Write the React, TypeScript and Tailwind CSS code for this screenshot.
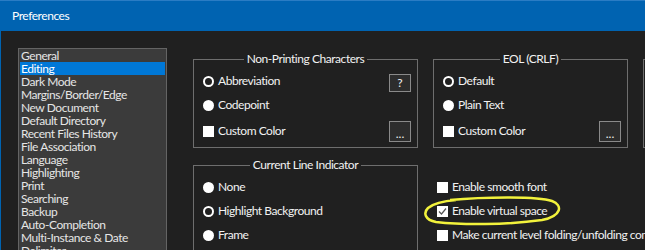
import type { ReactNode } from "react";

const font = { fontFamily: 'Lato, "Noto Sans", Arial, sans-serif' };

const pages = [
  "General",
  "Editing",
  "Dark Mode",
  "Margins/Border/Edge",
  "New Document",
  "Default Directory",
  "Recent Files History",
  "File Association",
  "Language",
  "Highlighting",
  "Print",
  "Searching",
  "Backup",
  "Auto-Completion",
  "Multi-Instance & Date",
  "Delimiter",
];

function Radio({ checked, label }: { checked?: boolean; label: string }) {
  return (
    <div className="flex items-center gap-[4px]">
      {checked ? (
        <span className="box-border block h-[11px] w-[11px] rounded-full border-[2px] border-white bg-[#202020]" />
      ) : (
        <span className="block h-[11px] w-[11px] rounded-full bg-white" />
      )}
      <span>{label}</span>
    </div>
  );
}

function Check({ checked, label }: { checked?: boolean; label: string }) {
  return (
    <div className="flex items-center gap-[4px]">
      <span className="flex h-[11px] w-[11px] items-center justify-center bg-white">
        {checked && (
          <svg width="9" height="9" viewBox="0 0 9 9">
            <path d="M1 4.5 L3.5 7 L8 1.5" fill="none" stroke="#555555" strokeWidth="1.2" />
          </svg>
        )}
      </span>
      <span className="whitespace-nowrap">{label}</span>
    </div>
  );
}

function Btn({ children, tall }: { children: ReactNode; tall?: boolean }) {
  return (
    <div
      className={
        "flex w-[22px] items-center justify-center border border-[#8a8a8a] bg-[#2d2d2d] text-[12px] leading-none tracking-normal " +
        (tall ? "h-[21px] pt-[5px]" : "mt-[4px] h-[18px]")
      }
    >
      {children}
    </div>
  );
}

function Group({
  title,
  className,
  children,
}: {
  title: string;
  className: string;
  children?: ReactNode;
}) {
  return (
    <div className={"shrink-0 border border-[#6e6e6e] " + className}>
      <div className="-mt-[9px] flex h-[16px] justify-center">
        <span className="bg-[#202020] px-[3px] leading-[16px]">{title}</span>
      </div>
      <div className="mt-[2px]">{children}</div>
    </div>
  );
}

export default function App() {
  return (
    <div
      className="relative h-[250px] w-[645px] overflow-hidden bg-[#202020] text-[12px] tracking-[-0.45px] text-[#f2f2f2]"
      style={font}
    >
      <div className="flex h-[31px] items-center border-t border-[#2a7cc4] bg-[#0063b1] pl-[12px] text-[12px] text-white">
        Preferences
      </div>
      <div className="flex h-[219px] border-l border-[#0063b1] pl-[17px] pt-[17px]">
        {/* page list */}
        <div className="h-[260px] w-[149px] shrink-0 border border-[#646464] bg-[#3b3b3b] px-[1px] text-[#e6e6e6]">
          {pages.map((p) => (
            <div
              key={p}
              className={
                "h-[13px] whitespace-nowrap pl-[1px] leading-[13px] " +
                (p === "Editing" ? "bg-[#0078d7] text-white" : "")
              }
            >
              {p}
            </div>
          ))}
        </div>

        {/* settings */}
        <div className="ml-[26px] flex flex-col pt-[11px]">
          <div className="flex gap-[15px]">
            <Group title="Non-Printing Characters" className="h-[89px] w-[225px]">
              <div className="pl-[9px] pr-[6px]">
                <div className="flex h-[24px] items-center justify-between">
                  <Radio checked label="Abbreviation" />
                  <Btn>?</Btn>
                </div>
                <div className="flex h-[24px] items-center">
                  <Radio label="Codepoint" />
                </div>
                <div className="mt-[2px] flex h-[24px] items-center justify-between">
                  <Check label="Custom Color" />
                  <Btn tall>...</Btn>
                </div>
              </div>
            </Group>
            <Group title="EOL (CRLF)" className="h-[89px] w-[195px]">
              <div className="pl-[9px] pr-[6px]">
                <div className="flex h-[24px] items-center">
                  <Radio checked label="Default" />
                </div>
                <div className="flex h-[24px] items-center">
                  <Radio label="Plain Text" />
                </div>
                <div className="mt-[2px] flex h-[24px] items-center justify-between">
                  <Check label="Custom Color" />
                  <Btn tall>...</Btn>
                </div>
              </div>
            </Group>
            <Group title="" className="h-[89px] w-[200px]" />
          </div>

          <div className="mt-[17px] flex gap-[15px]">
            <Group title="Current Line Indicator" className="h-[100px] w-[225px]">
              <div className="pl-[9px]">
                <div className="flex h-[24px] items-center">
                  <Radio label="None" />
                </div>
                <div className="flex h-[24px] items-center">
                  <Radio checked label="Highlight Background" />
                </div>
                <div className="flex h-[24px] items-center">
                  <Radio label="Frame" />
                </div>
              </div>
            </Group>
            <div className="pl-[4px] pt-[10px]">
              <div className="flex h-[24px] items-center">
                <Check label="Enable smooth font" />
              </div>
              <div className="flex h-[24px] items-center">
                <Check checked label="Enable virtual space" />
              </div>
              <div className="flex h-[24px] items-center">
                <Check label="Make current level folding/unfolding commands" />
              </div>
            </div>
          </div>
        </div>
      </div>

      {/* hand-drawn highlight */}
      <svg
        className="pointer-events-none absolute left-[422px] top-[195px]"
        width="142"
        height="31"
        viewBox="0 0 142 31"
      >
        <path
          d="M28 5 C60 2 115 1 130 6 C141 10 140 21 120 25 C85 30 40 30 14 27 C3 25 1 18 6 13 C12 8 22 6 34 5"
          fill="none"
          stroke="#f2f23c"
          strokeWidth="2.5"
        />
      </svg>
    </div>
  );
}
